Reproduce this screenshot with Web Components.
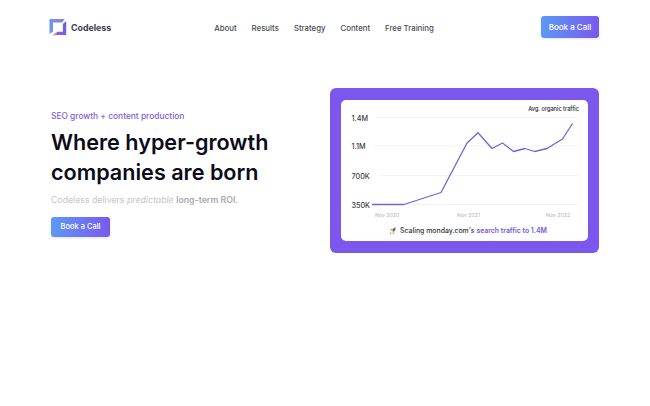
<!DOCTYPE html>
<html lang="en">
<head>
<meta charset="utf-8">
<title>Codeless</title>
<style>
  html, body { margin:0; padding:0; background:#fff; }
  body { font-family:"Inter","Noto Sans",sans-serif; width:650px; height:406px; overflow:hidden; }
</style>
</head>
<body>
<site-page>
  <site-header slot="header"></site-header>
  <hero-copy slot="left"></hero-copy>
  <traffic-card slot="right"></traffic-card>
</site-page>

<script>
class SitePage extends HTMLElement {
  constructor() {
    super();
    this.attachShadow({ mode: 'open' }).innerHTML = `
      <style>
        :host { display:block; }
        .hero {
          display:flex; justify-content:space-between; align-items:flex-start;
          padding:36px 51px 0 51px;
        }
      </style>
      <slot name="header"></slot>
      <section class="hero">
        <slot name="left"></slot>
        <slot name="right"></slot>
      </section>
    `;
  }
}
customElements.define('site-page', SitePage);

class CtaButton extends HTMLElement {
  constructor() {
    super();
    this.attachShadow({ mode: 'open' }).innerHTML = `
      <style>
        :host { display:inline-flex; }
        .btn {
          display:flex; align-items:center; justify-content:center;
          width:var(--btn-w, 59px); height:var(--btn-h, 21px);
          border-radius:3px; color:#fff;
          background:linear-gradient(95deg,#5b9bf3 0%,#7a58ee 100%);
          font-size:var(--btn-font, 8px); font-weight:500;
          padding-bottom:1px; box-sizing:border-box;
          box-shadow:0 1px 3px rgba(122,88,238,.18);
        }
      </style>
      <div class="btn"><slot></slot></div>
    `;
  }
}
customElements.define('cta-button', CtaButton);

class BrandLogo extends HTMLElement {
  constructor() {
    super();
    this.attachShadow({ mode: 'open' }).innerHTML = `
      <style>
        :host { display:inline-flex; align-items:center; gap:4px; }
        svg { display:block; }
        span { font-size:8.8px; font-weight:700; color:#3c3c55; }
      </style>
      <svg width="18" height="18" viewBox="0 0 18 18">
        <defs>
          <linearGradient id="tl" x1="0" y1="1" x2="1" y2="0">
            <stop offset="0" stop-color="#5f9ff6"/>
            <stop offset="1" stop-color="#8a7cf0"/>
          </linearGradient>
          <linearGradient id="br" x1="0" y1="1" x2="1" y2="0">
            <stop offset="0" stop-color="#8468ea"/>
            <stop offset="1" stop-color="#6f55e2"/>
          </linearGradient>
        </defs>
        <path fill="url(#tl)" d="M.5 1.4Q.5 1 1 1H15.8L13 4.4H4V13.4L.5 16Z"/>
        <path fill="url(#br)" d="M17.2 3V16.6Q17.2 17 16.8 17H5.6L8.4 13.8H13.9V6Z"/>
        <path fill="#ee9a55" d="M3.4 17.6L6.6 14.6H8.2L5.8 17.6Z"/>
      </svg>
      <span>Codeless</span>
    `;
  }
}
customElements.define('brand-logo', BrandLogo);

class SiteHeader extends HTMLElement {
  constructor() {
    super();
    const links = ['About', 'Results', 'Strategy', 'Content', 'Free Training'];
    this.attachShadow({ mode: 'open' }).innerHTML = `
      <style>
        :host { display:block; }
        header {
          display:grid; grid-template-columns:1fr auto 1fr; align-items:center;
          height:52px; padding:2px 51px 0 49px; box-sizing:border-box;
        }
        nav { display:flex; gap:15px; font-size:7.8px; font-weight:500; color:#4a4a55; padding-top:2px; }
        .end { justify-self:end; --btn-w:58px; --btn-h:22px; }
      </style>
      <header>
        <brand-logo></brand-logo>
        <nav>${links.map(l => `<span>${l}</span>`).join('')}</nav>
        <cta-button class="end">Book a Call</cta-button>
      </header>
    `;
  }
}
customElements.define('site-header', SiteHeader);

class HeroCopy extends HTMLElement {
  constructor() {
    super();
    this.attachShadow({ mode: 'open' }).innerHTML = `
      <style>
        :host { display:block; padding-top:22px; --btn-font:7.5px; }
        .eyebrow { font-size:8.4px; line-height:12px; font-weight:500; color:#7d62e0; }
        h1 { margin:5px 0 0; font-size:21.6px; line-height:30px; font-weight:600; color:#0b0b1a; white-space:nowrap; }
        p { margin:7px 0 0; font-size:8.75px; line-height:13px; color:#c4c4c8; white-space:nowrap; }
        em { font-style:italic; }
        b { font-weight:600; color:#a9a9af; }
        cta-button { margin-top:10px; --btn-w:59px; --btn-h:20px; }
      </style>
      <div class="eyebrow">SEO growth + content production</div>
      <h1>Where hyper-growth<br>companies are born</h1>
      <p>Codeless delivers <em>predictable</em> <b>long-term ROI.</b></p>
      <cta-button>Book a Call</cta-button>
    `;
  }
}
customElements.define('hero-copy', HeroCopy);

class TrafficCard extends HTMLElement {
  constructor() {
    super();
    // chart points, read off the reference (inner card coordinates)
    const pts = [[31,104.5],[63,104.5],[100,92.5],[126,43],[137,32.8],[151,48.5],[161.5,43],[172.5,51.5],[184,48.5],[193.5,51.5],[206,48.5],[221.5,39],[231.5,23.5]];
    const grid = [[17.5,'1.4M',36],[46,'1.1M',33],[75.5,'700K',39],[104.5,'350K',31]];
    this.attachShadow({ mode: 'open' }).innerHTML = `
      <style>
        :host { display:block; }
        .frame {
          width:269px; height:165px; box-sizing:border-box; padding:12px 11px;
          background:#7b57ee; border-radius:6px;
        }
        .inner {
          height:141px; background:#fff; border-radius:5px;
          display:flex; flex-direction:column; overflow:hidden;
        }
        svg { display:block; flex:none; }
        text { font-family:"Inter","Noto Sans",sans-serif; }
        .caption {
          display:flex; align-items:center; justify-content:center; gap:3px;
          font-size:6.9px; font-weight:500; color:#33333f; height:14px; padding-left:7px;
        }
        .caption b { font-weight:600; color:#7458dd; }
      </style>
      <div class="frame">
        <div class="inner">
          <svg width="247" height="123" viewBox="0 0 247 123">
            <text x="238" y="10.5" text-anchor="end" font-size="5.6" font-weight="500" fill="#22222c">Avg. organic traffic</text>
            ${grid.map(g => `
              <line x1="${g[2]}" x2="237" y1="${g[0]}" y2="${g[0]}" stroke="#f1f1f4" stroke-width="1"/>
              <text x="10.5" y="${g[0] + 3}" font-size="7.2" font-weight="500" fill="#3a3a42">${g[1]}</text>
            `).join('')}
            <polyline fill="none" stroke="#7a60d8" stroke-width="1.3" stroke-linejoin="round" points="${pts.map(p => p.join(',')).join(' ')}"/>
            <text x="34" y="117" font-size="5.2" fill="#b2b2b8">Nov 2020</text>
            <text x="116" y="117" font-size="5.2" fill="#b2b2b8">Nov 2021</text>
            <text x="205" y="117" font-size="5.2" fill="#b2b2b8">Nov 2022</text>
          </svg>
          <div class="caption">
            <svg width="8" height="9" viewBox="0 0 8 9">
              <path fill="#d8d8de" d="M3 2.5L7.5 .5L6.5 5L3.5 7Z"/>
              <path fill="#5c5c68" d="M3.6 3.2L6.6 1.6L5.8 4.6L4 5.8Z"/>
              <path fill="#e2853c" d="M1 3.5L3.4 2.8L2.4 5ZM3.4 7.2L5.6 6L4.6 8.2Z"/>
              <path fill="#f3b23f" d="M.6 8.4L1.4 5.8L3 7.4Z"/>
            </svg>
            <span>Scaling monday.com's <b>search traffic to 1.4M</b></span>
          </div>
        </div>
      </div>
    `;
  }
}
customElements.define('traffic-card', TrafficCard);
</script>
</body>
</html>
